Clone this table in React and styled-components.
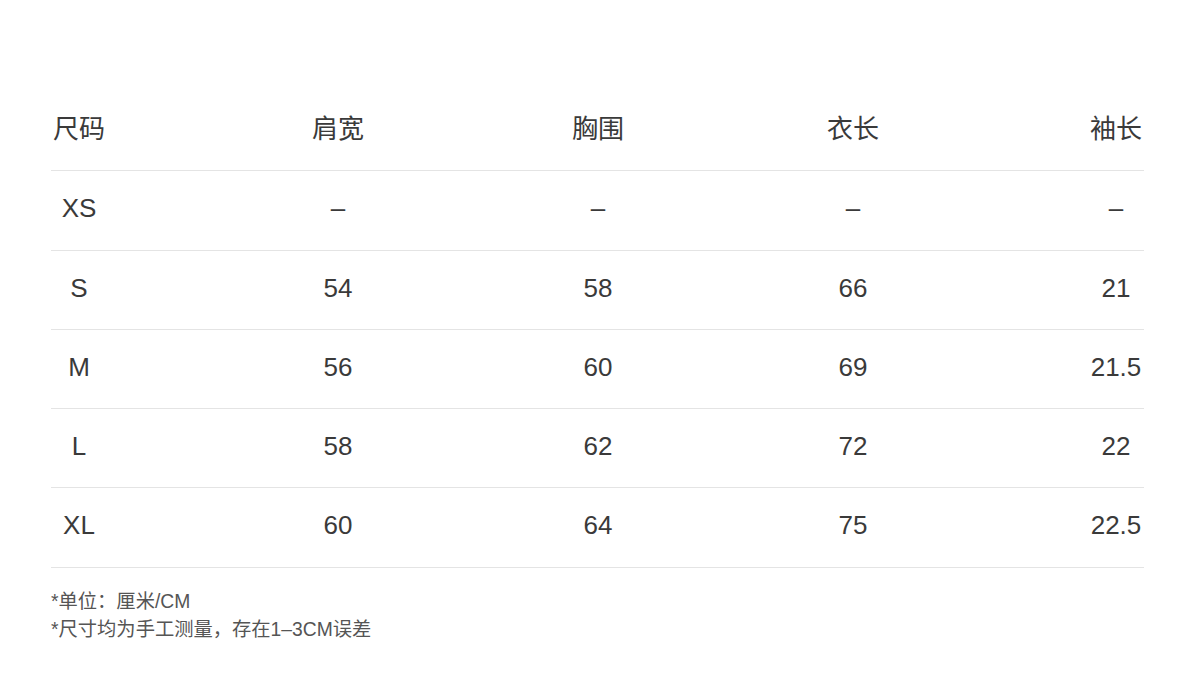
import React from "react";
import styled, { createGlobalStyle } from "styled-components";

const Global = createGlobalStyle`
  body, html {
    margin: 0;
    background: #fff;
  }
  body {
    font-family: "Liberation Sans", "Noto Sans CJK SC", sans-serif;
  }
`;

const Page = styled.div`
  padding: 92px 56px 0 51px;
`;

const Table = styled.div`
  display: flex;
  flex-direction: column;
`;

// size columns are 56px wide, with uneven gaps between them
const Row = styled.div`
  display: grid;
  grid-template-columns: 56px 203fr 56px 204fr 56px 199fr 56px 207fr 56px;
  padding: 22px 0 26.3px;
  border-bottom: 1px solid #e4e4e4;
`;

const Cell = styled.div`
  grid-column: ${({ $col }) => $col * 2 + 1};
  display: flex;
  justify-content: center;
  white-space: nowrap;
  font-size: 26px;
  line-height: 30px;
  color: #3a3a3a;
`;

const Notes = styled.div`
  padding-top: 20px;
  font-size: 19.3px;
  line-height: 28px;
  color: #555;
`;

const head = ["尺码", "肩宽", "胸围", "衣长", "袖长"];

const rows = [
  ["XS", "–", "–", "–", "–"],
  ["S", "54", "58", "66", "21"],
  ["M", "56", "60", "69", "21.5"],
  ["L", "58", "62", "72", "22"],
  ["XL", "60", "64", "75", "22.5"],
];

const App = () => {
  return (
    <>
      <Global />
      <Page>
        <Table>
          <Row>
            {head.map((h, i) => (
              <Cell key={h} $col={i}>
                {h}
              </Cell>
            ))}
          </Row>
          {rows.map((r) => (
            <Row key={r[0]}>
              {r.map((v, i) => (
                <Cell key={i} $col={i}>
                  {v}
                </Cell>
              ))}
            </Row>
          ))}
        </Table>
        <Notes>
          <div>*单位：厘米/CM</div>
          <div>*尺寸均为手工测量，存在1–3CM误差</div>
        </Notes>
      </Page>
    </>
  );
};

export default App;
